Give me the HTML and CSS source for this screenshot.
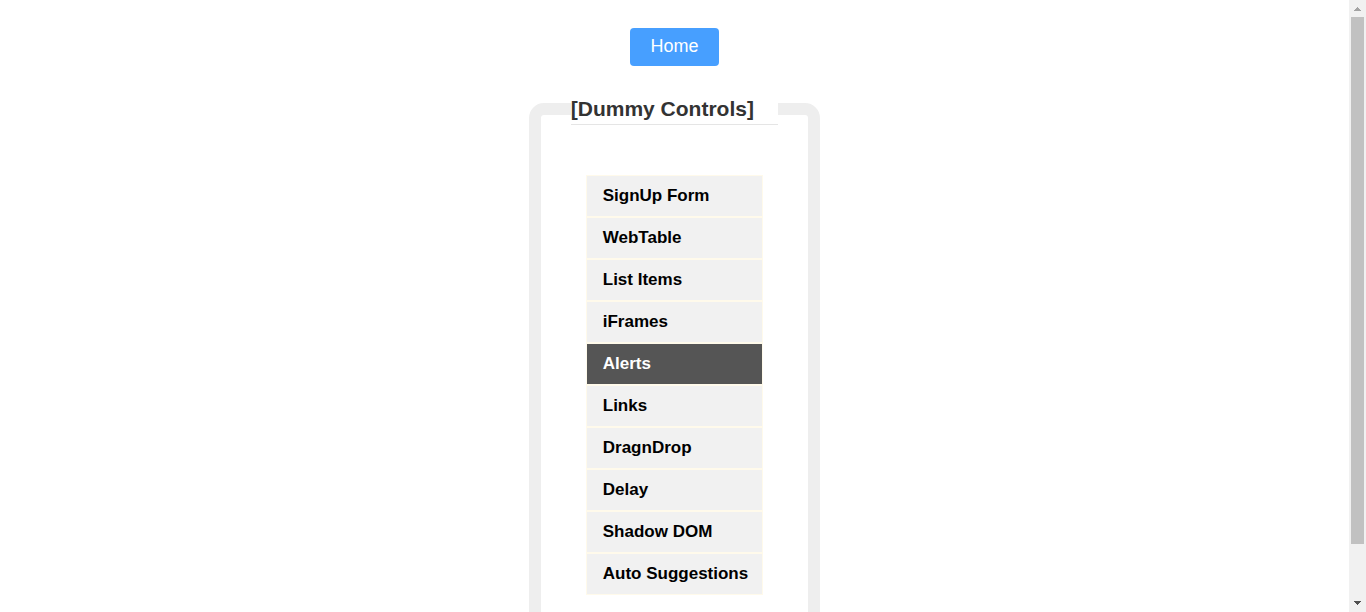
FILE: index.html
```html
<!DOCTYPE html>
<html lang="en">
<head>
<meta charset="utf-8">
<title>Dummy Controls</title>
<link rel="stylesheet" href="styles.css">
</head>
<body>
<main class="page">
  <a class="home" href="#">Home</a>
  <fieldset class="panel">
    <legend class="panel-title">[Dummy Controls]</legend>
    <nav class="menu">
      <a class="item" href="#">SignUp Form</a>
      <a class="item" href="#">WebTable</a>
      <a class="item" href="#">List Items</a>
      <a class="item" href="#">iFrames</a>
      <a class="item active" href="#">Alerts</a>
      <a class="item" href="#">Links</a>
      <a class="item" href="#">DragnDrop</a>
      <a class="item" href="#">Delay</a>
      <a class="item" href="#">Shadow DOM</a>
      <a class="item" href="#">Auto Suggestions</a>
    </nav>
  </fieldset>
</main>
<div class="scrollbar" aria-hidden="true">
  <svg class="arrow up" viewBox="0 0 17 17" shape-rendering="crispEdges"><path d="M8 7h1v1h1v1h1v1h1v1H5v-1h1V9h1V8h1z"/></svg>
  <div class="track"><div class="thumb"></div></div>
  <svg class="arrow" viewBox="0 0 17 17" shape-rendering="crispEdges"><path d="M5 6h7v1h-1v1h-1v1H9v1H8V9H7V8H6V7H5z"/></svg>
</div>
</body>
</html>
```
FILE: styles.css
```css
* {
  box-sizing: border-box;
}

body {
  margin: 0;
  height: 100vh;
  display: flex;
  overflow: hidden;
  background: #fff;
  color: #333;
  font-family: "Liberation Sans", Arial, sans-serif;
}

.page {
  flex: 1;
  display: flex;
  flex-direction: column;
  align-items: center;
  padding-top: 28px;
  overflow: hidden;
}

.home {
  flex: none;
  padding: 8px 20px 10px;
  border-radius: 4px;
  background: #479fff;
  color: #fff;
  font-size: 18px;
  line-height: 20px;
  text-decoration: none;
}

.panel {
  flex: none;
  margin: 27px 0 0;
  padding: 50px 30px 40px;
  border: 12px solid #eee;
  border-radius: 15px;
}

.panel-title {
  width: 100%;
  padding: 0;
  border-bottom: 1px solid #e5e5e5;
  font-size: 21px;
  font-weight: bold;
  line-height: 31px;
}

.menu {
  display: flex;
  flex-direction: column;
  margin: 0 15px;
}

.item {
  padding: 8px 14px 8px 16px;
  border: 1px solid #fffaeb;
  background: #f1f1f1;
  color: #000;
  font-size: 17px;
  font-weight: bold;
  line-height: 24px;
  text-decoration: none;
}

.item.active {
  background: #555;
  color: #fff;
}

.scrollbar {
  flex: none;
  width: 17px;
  display: flex;
  flex-direction: column;
  background: #f1f1f1;
}

.arrow {
  width: 17px;
  height: 17px;
  fill: #505050;
}

.arrow.up {
  fill: #a3a3a3;
}

.track {
  flex: 1;
  padding: 0 2px;
}

.thumb {
  height: calc(100% - 51px);
  background: #c1c1c1;
}
```
